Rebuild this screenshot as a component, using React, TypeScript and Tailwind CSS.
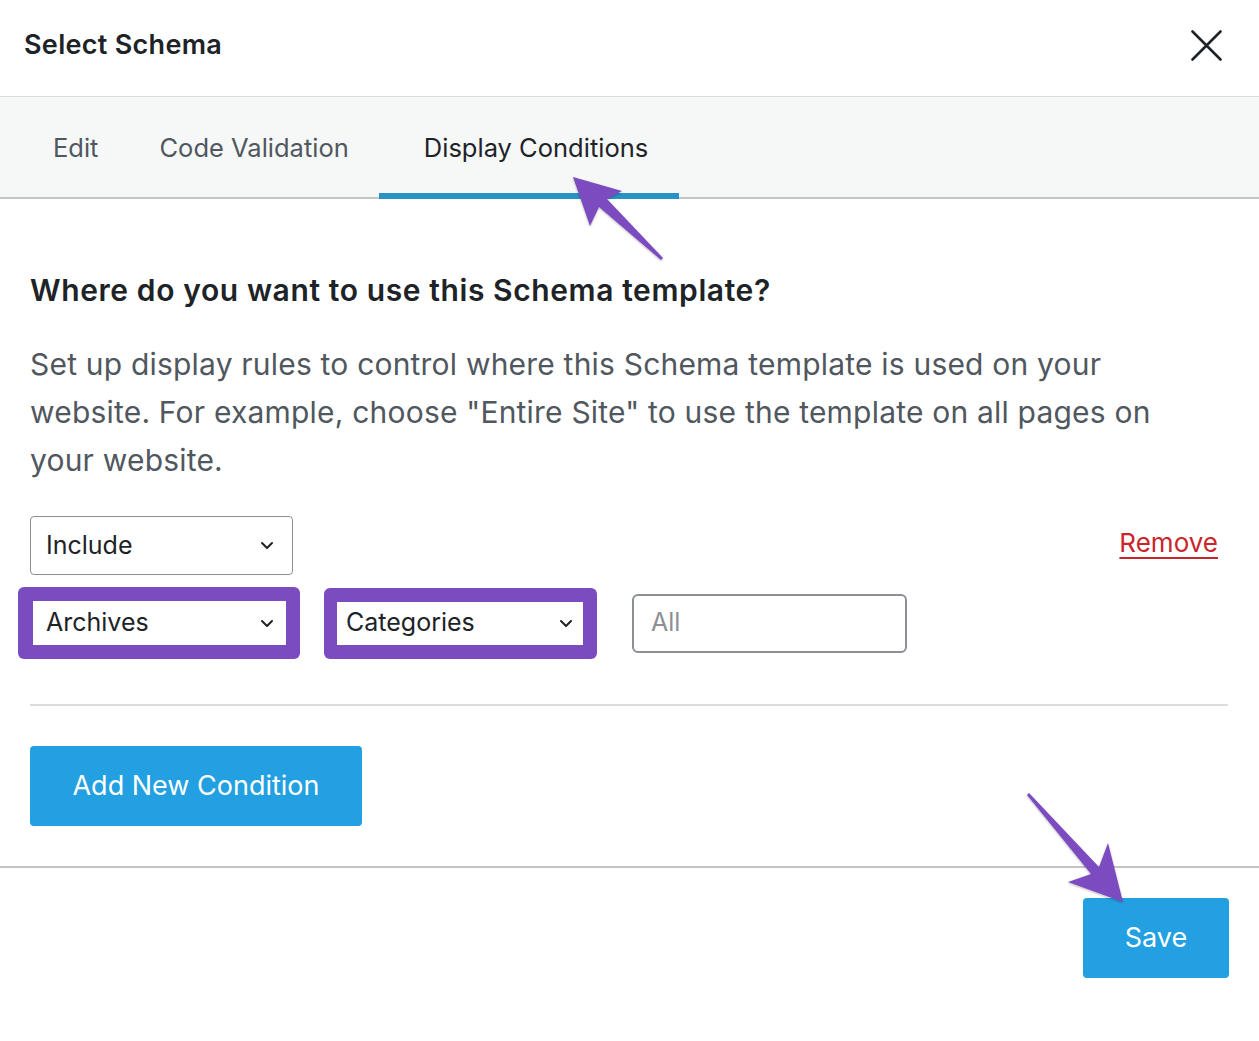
import React from "react";

const font = { fontFamily: "Inter, 'Noto Sans', 'Liberation Sans', sans-serif" };

const Chevron = () => (
  <svg width="14" height="9" viewBox="0 0 14 9" fill="none" className="shrink-0">
    <path d="M2 2l5 5 5-5" stroke="#1d2327" strokeWidth="2" strokeLinecap="round" strokeLinejoin="round" />
  </svg>
);

const Select = ({ label, className }: { label: string; className: string }) => (
  <div className={`flex items-center justify-between bg-white text-[25px] text-[#1d2327] ${className}`}>
    <span>{label}</span>
    <Chevron />
  </div>
);

export default function App() {
  return (
    <div className="relative w-[1259px] h-[1041px] bg-white overflow-hidden" style={font}>
      {/* header */}
      <div className="flex items-center justify-between h-[97px] pl-6 pr-[37px] pb-[6px] border-b border-[#dcdcde]">
        <h1 className="text-[27px] font-semibold text-[#1d2327] tracking-[0.3px]">Select Schema</h1>
        <button className="w-[31px] h-[31px]">
          <svg viewBox="0 0 31 31" width="31" height="31">
            <path d="M1.5 1.5l28 28M29.5 1.5l-28 28" stroke="#1d2327" strokeWidth="2.6" strokeLinecap="round" />
          </svg>
        </button>
      </div>

      {/* tabs */}
      <div className="flex h-[102px] bg-[#f6f7f7] border-b-2 border-[#c3c4c7] text-[25.5px]">
        <div className="flex items-center ml-[53px] pt-[3px] text-[#50575e]">Edit</div>
        <div className="flex items-center ml-[61px] pt-[3px] text-[#50575e]">Code Validation</div>
        <div className="flex items-center ml-[30px] w-[300px] pl-[45px] pt-[6px] text-[#1d2327] border-b-[6px] border-[#2892c7] -mb-[2px]">
          Display Conditions
        </div>
      </div>

      {/* body */}
      <div className="pl-[30px] pr-[31px] pt-[71px]">
        <h2 className="text-[30px] leading-[40px] font-semibold text-[#1d2327] tracking-[0.6px]">
          Where do you want to use this Schema template?
        </h2>
        <p className="mt-[30px] max-w-[1140px] text-[30px] leading-[48px] text-[#50575e] tracking-[0.2px]">
          Set up display rules to control where this Schema template is used on your website. For example, choose "Entire Site" to use the template on all pages on your website.
        </p>

        <div className="flex items-center justify-between mt-[32px]">
          <Select label="Include" className="w-[263px] h-[59px] pl-[15px] pr-[18px] border border-[#8c8f94] rounded-[4px]" />
          <a className="mr-[10px] -mt-[6px] text-[26px] text-[#c9252c] underline decoration-2 underline-offset-[5px]">Remove</a>
        </div>

        <div className="flex items-center mt-[12px] -ml-3">
          <div className="w-[282px] h-[72px] bg-[#7b4bc0] rounded-[6px] pl-[15px] pr-[14px] py-[14px]">
            <Select label="Archives" className="w-full h-full pl-[13px] pr-[12px]" />
          </div>
          <div className="w-[273px] h-[71px] ml-[24px] bg-[#7b4bc0] rounded-[6px] pl-[13px] pr-[14px] py-[14px]">
            <Select label="Categories" className="w-full h-full pl-[9px] pr-[10px]" />
          </div>
          <div className="flex items-center w-[275px] h-[59px] ml-[35px] border-2 border-[#8c8f94] rounded-[6px] pl-[17px] text-[25px] text-[#8c8f94]">
            All
          </div>
        </div>

        <div className="mt-[45px] h-[2px] bg-[#dcdcde]" />

        <button className="mt-[40px] w-[332px] h-[80px] rounded-[4px] bg-[#22a0e1] text-white text-[27px]">
          Add New Condition
        </button>
      </div>

      {/* footer */}
      <div className="mt-[40px] border-t-2 border-[#c3c4c7] flex justify-end pr-[30px] pt-[30px]">
        <button className="w-[146px] h-[80px] rounded-[4px] bg-[#22a0e1] text-white text-[27px]">Save</button>
      </div>

      {/* annotation arrows */}
      <svg className="absolute inset-0 pointer-events-none" width="1259" height="1041" viewBox="0 0 1259 1041">
        <defs>
          <filter id="sh" x="-20%" y="-20%" width="140%" height="140%">
            <feDropShadow dx="0" dy="1" stdDeviation="1.2" floodColor="#000" floodOpacity="0.3" />
          </filter>
        </defs>
        <polygon
          points="573,177 622,191 607,199 663,258 661,260 599,207 590,226"
          fill="#7b4bc0"
          filter="url(#sh)"
        />
        <polygon
          points="1123,902 1068,882 1091,874 1027,795 1029,793 1099,867 1108,843"
          fill="#7b4bc0"
          filter="url(#sh)"
        />
      </svg>
    </div>
  );
}
